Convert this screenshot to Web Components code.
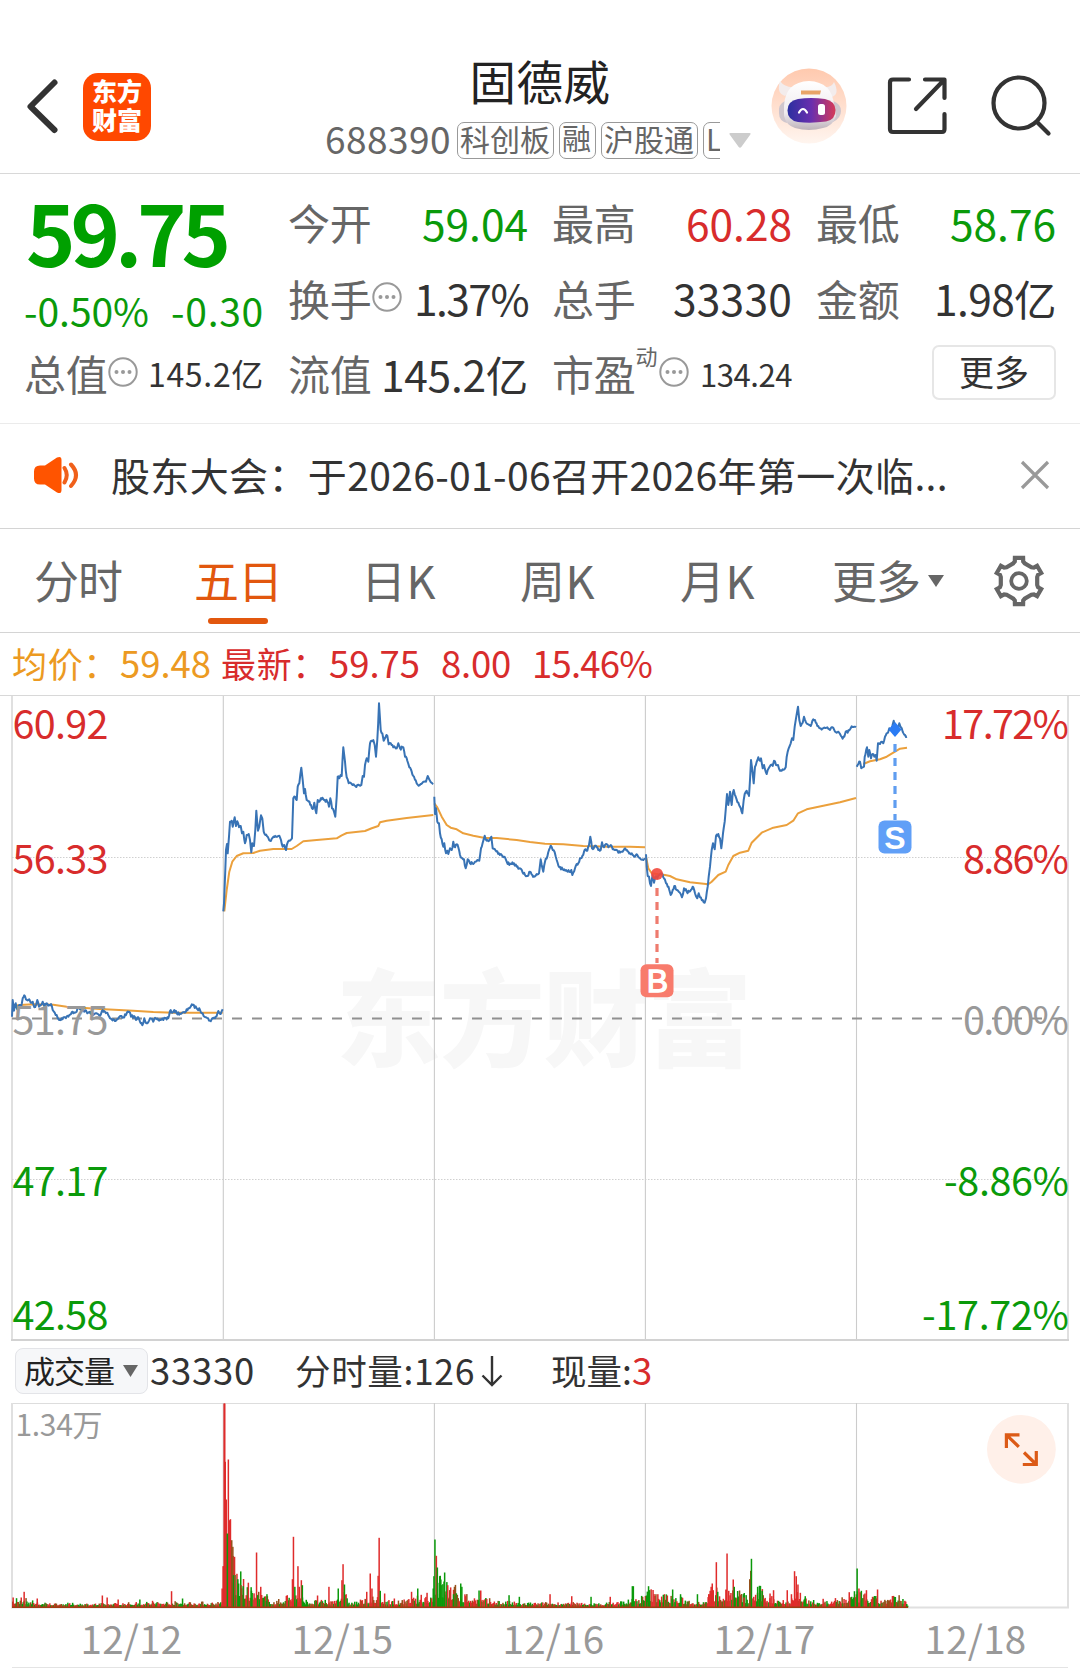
<!DOCTYPE html>
<html lang="zh-CN">
<head>
<meta charset="utf-8">
<title>固德威 688390</title>
<style>
html,body{margin:0;padding:0;background:#fff}
body{width:1080px;height:1668px;overflow:hidden;font-family:"Noto Sans CJK SC",sans-serif;color:#333}
</style>
</head>
<body>
<stock-page></stock-page>
<script>
const GREEN='#0a9a0a', RED='#d82c2c', GREY='#666', LIGHT='#999', ORANGE='#e2570e';

function define(name, html, after){
  customElements.define(name, class extends HTMLElement{
    constructor(){ super(); this.attachShadow({mode:'open'}); }
    connectedCallback(){
      this.shadowRoot.innerHTML = typeof html==='function' ? html(this) : html;
      if(after) after(this);
    }
  });
}

define('x-text', el=>`<style>
  :host{display:block;flex:none;white-space:pre;${el.hasAttribute('w')?`width:${el.getAttribute('w')}px;`:''}
    font-size:${el.getAttribute('size')||36}px;color:${el.getAttribute('c')||'inherit'};font-weight:${el.getAttribute('wt')||400}}
  div{line-height:1.2;margin-top:${el.getAttribute('lift')||'-.05'}em;white-space:pre}
</style><div><span><slot></slot></span></div>`, el=>{
  const w=+el.getAttribute('w'); if(!w) return;
  const n=[...el.textContent].length, s=el.shadowRoot.querySelector('span');
  s.style.letterSpacing=((w-s.getBoundingClientRect().width)/n)+'px';
});

define('info-dot', `<style>:host{display:block;flex:none;width:30px;height:30px;margin-top:-4px}svg{display:block}</style>
<svg width="30" height="30"><circle cx="15" cy="15" r="13.7" fill="none" stroke="#999" stroke-width="2"/>
<g fill="#999"><circle cx="8.5" cy="15" r="2"/><circle cx="15" cy="15" r="2"/><circle cx="21.5" cy="15" r="2"/></g></svg>`);

define('stock-tag', `<style>:host{display:flex;flex:none;box-sizing:border-box;height:37px;border:1.5px solid #999;border-radius:7px;align-items:center;padding-left:2px;color:#666}</style><slot></slot>`);

define('top-bar', `<style>
:host{display:flex;box-sizing:border-box;height:174px;padding-top:40px;border-bottom:1px solid #d8d8d8;align-items:center}
svg{display:block;flex:none}
.logo{flex:none;width:68px;height:68px;border-radius:15px;background:#ff4800;margin-left:21px;display:flex;flex-direction:column;align-items:center;justify-content:center;gap:2px;box-sizing:border-box;padding-bottom:1px}
.mid{flex:none;margin-left:174px;width:426px;align-self:stretch}
.title{display:flex;justify-content:center;align-items:center;height:58px;padding:13px 0 0 4px}
.code{display:flex;align-items:center;height:37px;margin-top:11px}
.tags{display:flex;gap:5px;width:263px;margin-left:6px;overflow-x:clip;overflow-y:visible}
</style>
<svg width="36" height="60" style="margin-left:25px"><path d="M29.5 5.500 5.500 29.500 29.500 53" fill="none" stroke="#333" stroke-width="6" stroke-linecap="round" stroke-linejoin="round"/></svg>
<div class="logo" style="margin-left:22px"><x-text size="25" w="50" c="#fff" wt="900" lift="-.12">东方</x-text><x-text size="25" w="50" c="#fff" wt="900" lift="-.12">财富</x-text></div>
<div class="mid">
 <div class="title"><x-text size="46.500" w="141" c="#222" lift="-.1">固德威</x-text></div>
 <div class="code"><x-text size="37" w="126" c="#666" lift="-.12">688390</x-text>
  <div class="tags"><stock-tag style="width:97px"><x-text size="30" w="90" lift="-.18">科创板</x-text></stock-tag><stock-tag style="width:37px"><x-text size="29" w="30" lift="-.18">融</x-text></stock-tag><stock-tag style="width:97px"><x-text size="30" w="90" lift="-.18">沪股通</x-text></stock-tag><stock-tag style="width:37px"><x-text size="30" lift="-.18">L</x-text></stock-tag></div>
  <svg width="22" height="15" style="margin-left:9px"><path d="M1.500 0h19q2 0 .5 2L12.300 14q-1.300 1.500-2.600 0L1 2Q-.5 0 1.500 0z" fill="#ccc"/></svg>
 </div>
</div>
<svg width="76" height="76" viewBox="0 0 76 76" style="margin-left:20px;margin-top:-1px">
 <defs><linearGradient id="bg" x2="0" y2="1"><stop offset="0" stop-color="#ffc9ae"/><stop offset="1" stop-color="#fff5ef"/></linearGradient>
 <linearGradient id="visor"><stop offset="0" stop-color="#2b2fa0"/><stop offset=".5" stop-color="#6a2fae"/><stop offset="1" stop-color="#d63a58"/></linearGradient>
 <linearGradient id="shell" x2="0" y2="1"><stop offset="0" stop-color="#fff"/><stop offset=".65" stop-color="#efebee"/><stop offset="1" stop-color="#bdb2ba"/></linearGradient></defs>
 <circle cx="38" cy="38" r="37.500" fill="url(#bg)"/>
 <path d="M9 13Q5 25 14 28L24 19Q14 20 9 13zM63 14Q69 26 61 29L52 19Q61 20 63 14z" fill="#f3ecec"/>
 <path d="M14 33Q7 36 8 45Q8 53 16 55zM62 33Q70 36 70 43Q70 50 62 54z" fill="#cfc6cd"/>
 <path d="M13 38Q14 14 38 13Q61 14 63 37L65 48Q62 58 52 60Q38 64 24 60Q15 57 13 48z" fill="url(#shell)"/>
 <path d="M27 31Q40 29 54 31Q64 33 64.500 42Q64.500 52 55 53.500Q40 55.500 27 54Q16.500 52 16.500 42.500Q16.500 33 27 31z" fill="url(#visor)"/>
 <path d="M30 22.500h20l-1 4H30z" fill="#e8a468"/><path d="M28 44.500q4-7 8 0" fill="none" stroke="#fff" stroke-width="2.200" stroke-linecap="round"/><rect x="47" y="36" width="7" height="11" rx="2.500" fill="#fff"/>
</svg>
<svg width="60" height="60" style="margin-left:40px;margin-top:-1px" fill="none" stroke="#333" stroke-width="4.200" stroke-linecap="round" stroke-linejoin="round"><path d="M22 3.500H6Q3 3.500 3 6.500V53Q3 56 6 56H55Q57.500 56 57.500 53V38M38 3.500H57.500V22M57 4 29 33"/></svg>
<svg width="62" height="62" style="margin-left:43px;margin-top:-2px" fill="none" stroke="#333" stroke-width="4.200" stroke-linecap="round"><circle cx="29" cy="28" r="25.500"/><path d="M47 47 58.500 58.500"/></svg>`);

define('stat-cell', `<style>:host{display:flex;align-items:center;min-width:0}.v{margin-left:auto;display:flex}.u{margin-bottom:38px}</style>
<slot name="label"></slot><div class="u"><slot name="sup"></slot></div><slot name="icon"></slot><div class="v"><slot></slot></div>`);

const lab=(t)=>`<x-text slot="label" size="42" w="83.500" c="#666">${t}</x-text>`;
const cell=(t,v,w,c='#333',o={})=>`<stat-cell>${lab(t)}${o.sup?`<x-text slot="sup" size="22" w="23" c="#666">动</x-text>`:''}${o.dot?'<info-dot slot="icon"></info-dot>':''}<x-text size="${o.size||42.5}" w="${w}" c="${c}">${v}</x-text></stat-cell>`;
define('stat-grid', `<style>
:host{display:grid;box-sizing:border-box;height:250px;padding:12px 0 0 24px;grid-template-columns:repeat(4,240px);grid-template-rows:repeat(3,75.300px);column-gap:24px;border-bottom:1px solid #ebebeb}
.price{grid-row:1/3;display:flex;flex-direction:column}
.big{height:100px;display:flex;align-items:center;padding-left:2px}
.chg{height:50px;display:flex;align-items:center;justify-content:space-between}
.more{justify-self:end;align-self:center;width:124px;height:55px;box-sizing:border-box;border:2px solid #e6e6e6;border-radius:7px;display:flex;align-items:center;justify-content:center;margin-top:-3px;margin-right:0}
</style>
<div class="price"><div class="big"><x-text size="84" w="200" c="#00a000" wt="700" lift="-.1">59.75</x-text></div>
<div class="chg"><x-text size="39" w="125" c="${GREEN}">-0.50%</x-text><x-text size="39" w="93" c="${GREEN}">-0.30</x-text></div></div>
${cell('今开','59.04',106,GREEN)}${cell('最高','60.28',106,RED)}${cell('最低','58.76',106,GREEN)}
${cell('换手','1.37%',114,'#333',{dot:1})}${cell('总手','33330',119)}${cell('金额','1.98亿',122)}
${cell('总值','145.2亿',116,'#333',{dot:1,size:32})}${cell('流值','145.2亿',147)}${cell('市盈','134.24',92,'#333',{dot:1,size:31,sup:1})}
<div class="more"><x-text size="35" w="70" lift="-.1">更多</x-text></div>`);

define('notice-bar', `<style>:host{display:flex;box-sizing:border-box;height:105px;border-bottom:1px solid #d4d4d4;align-items:center;padding-bottom:2px}svg{flex:none;display:block}x-text{margin-left:32px}</style>
<svg width="46" height="38" style="margin-left:33px"><path d="M7 9.500H12L24 1.500Q28.500-.500 28.500 4V34Q28.500 38.500 24 36.500L12 28.500H7Q1 28.500 1 22.500V15.500Q1 9.500 7 9.500z" fill="#ff5400"/><path d="M31.500 12Q36 19 31.500 26.500M38 8.500Q48 19 38 30" fill="none" stroke="#f0601a" stroke-width="4" stroke-linecap="round"/></svg>
<x-text size="39" w="837">股东大会：于2026-01-06召开2026年第一次临...</x-text>
<svg width="30" height="30" style="margin-left:72px"><path d="M2 2 28 28M28 2 2 28" stroke="#999" stroke-width="3.200"/></svg>`);

let gear='';
for(let k=0;k<6;k++){const p=(a,r)=>{const t=(k*60+a-90)*Math.PI/180;return (26+r*Math.cos(t)).toFixed(1)+' '+(26+r*Math.sin(t)).toFixed(1)};
 gear+=(k?'L':'M')+p(-18,18.6)+'L'+p(-12,20)+'L'+p(-10,23.6)+'L'+p(10,23.6)+'L'+p(12,20)+'L'+p(18,18.6);}
gear+='Z';
define('period-tabs', `<style>:host{display:flex;box-sizing:border-box;height:104px;border-bottom:1px solid #d4d4d4;color:#666;padding-left:34px}
div{flex:none;display:flex;flex-direction:column;align-items:center;height:103px;justify-content:flex-end;box-sizing:border-box}
.t{height:72px;flex-direction:row;justify-content:center;align-items:center;margin-bottom:15px}
i{display:block;height:6px;width:60px;border-radius:3px;background:${ORANGE};flex:none;margin-top:-1px}
.on{padding-bottom:8px;color:${ORANGE}}.on .t{margin-bottom:2px}
svg{display:block}</style>
<div style="width:88px"><div class="t"><x-text size="45" w="88">分时</x-text></div></div>
<div class="on" style="width:88px;margin-left:72px"><div class="t"><x-text size="45" w="88">五日</x-text></div><i></i></div>
<div style="width:75px;margin-left:79px"><div class="t"><x-text size="45" w="75">日K</x-text></div></div>
<div style="width:75px;margin-left:84px"><div class="t"><x-text size="45" w="75">周K</x-text></div></div>
<div style="width:75px;margin-left:85px"><div class="t"><x-text size="45" w="75">月K</x-text></div></div>
<div style="width:112px;margin-left:77px"><div class="t"><x-text size="45" w="88">更多</x-text><svg width="16" height="12" style="margin-left:8px"><path d="M0 0h16L8 12z" fill="#666"/></svg></div></div>
<div style="width:52px;margin-left:49px"><div class="t"><svg width="52" height="52"><path d="${gear}" fill="none" stroke="#666" stroke-width="4.200"/><circle cx="26" cy="26" r="7.800" fill="none" stroke="#666" stroke-width="3.800"/></svg></div></div>`);

define('price-legend', `<style>:host{display:flex;box-sizing:border-box;height:63px;border-bottom:1px solid #d8d8d8;align-items:center;padding:0 0 1px 12px}</style>
<x-text size="35" w="107" c="#ec9a22">均价：</x-text><x-text size="36.5" w="91" c="#ec9a22" style="margin-left:1px">59.48</x-text>
<x-text size="35" w="107" c="${RED}" style="margin-left:10px">最新：</x-text><x-text size="36.5" w="91" c="${RED}" style="margin-left:1px">59.75</x-text>
<x-text size="36.5" w="70" c="${RED}" style="margin-left:21px">8.00</x-text><x-text size="36.5" w="120" c="${RED}" style="margin-left:21px">15.46%</x-text>`);

/* Intraday traces, in thirds of a pixel from each day's origin. */
const DAYS=[
 [0,'36,980 38,930 42,962 47,940 52,958 58,945 63,952 68,925 73,916 80,930 88,928 92,938 98,935 103,952 108,945 112,930 117,950 123,945 128,935 133,948 140,940 147,945 153,942 158,960 164,968 170,975 177,990 185,985 195,982 205,980 213,972 218,965 225,968 235,955 245,960 255,962 262,970 270,965 280,975 290,970 300,978 308,960 315,965 322,968 330,985 340,988 347,993 355,985 362,978 370,982 380,970 388,965 393,980 402,978 408,990 415,982 420,995 427,1006 433,985 440,1000 450,985 460,995 468,985 475,990 485,988 495,985 505,985 512,960 517,968 523,960 530,970 545,970 555,968 565,955 578,945 590,955 600,960 608,970 618,982 630,992 640,985 650,978 655,963 662,972 668,958',
  '36,948 60,945 100,943 160,944 200,950 300,957 400,962 460,966 520,968 668,968'],
 [0,'670,664 672,640 676,540 678,480 681,462 683,490 687,440 690,395 695,392 698,410 704,382 708,408 712,394 717,412 722,408 726,430 730,425 735,460 740,435 746,432 750,450 754,487 757,460 762,468 766,420 769,362 774,422 778,410 783,376 787,385 791,425 796,435 803,440 810,452 818,443 828,440 838,437 843,450 848,470 853,465 858,480 864,455 872,450 876,445 880,325 885,320 890,330 893,290 898,280 904,233 908,270 912,310 915,297 920,330 926,335 933,345 938,357 943,338 949,370 953,330 960,332 967,323 974,330 982,335 987,350 991,325 996,355 1002,365 1006,380 1010,320 1013,260 1018,265 1022,255 1025,258 1030,172 1035,215 1040,262 1046,280 1055,282 1066,288 1075,284 1084,285 1088,258 1092,260 1095,225 1100,205 1105,215 1110,160 1115,152 1120,150 1124,165 1128,200 1132,150 1137,40 1142,120 1147,130 1151,152 1157,140 1162,137 1166,163 1172,160 1180,172 1190,175 1195,160 1200,175 1210,172 1215,200 1222,212 1228,232 1235,245 1242,260 1253,284 1262,282 1272,275 1278,275 1283,258 1290,272 1300,282',
  '673,664 680,600 688,545 697,515 710,498 730,490 760,489 780,482 820,477 875,477 890,468 910,454 950,450 1010,445 1025,436 1040,429 1095,423 1115,415 1135,408 1140,397 1160,392 1220,384 1300,375'],
 [430,'13,320 15,372 18,355 22,395 27,400 30,430 35,448 40,470 43,460 48,490 52,482 55,492 60,475 65,480 70,455 73,470 80,463 85,472 90,495 97,505 102,508 107,535 113,508 120,520 127,520 135,515 142,510 148,512 153,475 158,458 164,437 170,452 178,452 184,440 188,475 197,482 207,490 215,495 222,500 230,515 238,525 245,522 252,520 260,530 270,535 278,548 285,555 293,558 300,545 307,555 314,560 320,552 327,550 332,508 335,525 340,545 345,515 352,500 357,480 362,467 368,480 374,487 380,510 388,532 398,538 408,540 418,545 424,540 427,555 435,535 440,522 445,520 450,505 457,498 462,485 467,478 472,482 477,465 481,440 486,475 493,470 500,472 507,478 512,480 516,457 522,472 528,462 535,472 542,465 548,478 555,480 565,488 575,485 585,475 595,485 605,490 615,500 622,495 632,508 640,510 645,505',
  '13,340 22,352 35,380 50,405 62,413 80,418 100,430 130,437 165,444 200,444 260,450 300,456 345,461 400,463 460,468 540,470 600,470 645,472'],
 [640,'18,493 20,530 23,558 27,560 30,580 33,588 38,555 42,578 46,560 52,565 58,555 65,550 72,565 78,580 83,590 88,600 92,615 98,600 103,588 110,600 116,605 122,612 126,622 132,595 140,605 148,605 155,598 158,590 165,610 172,625 176,610 180,622 188,630 194,638 198,625 203,590 206,560 210,530 215,480 219,460 224,478 228,438 235,432 240,445 244,475 249,430 254,395 257,360 261,312 265,345 270,305 275,345 278,310 281,300 287,320 295,338 300,350 307,370 311,330 314,312 320,302 327,318 330,270 333,210 337,240 341,280 345,230 350,215 355,202 360,212 363,205 368,235 372,225 380,252 388,232 392,225 398,228 402,212 408,225 414,225 420,242 428,238 437,232 440,200 446,175 452,160 456,145 460,150 464,110 468,85 474,50 478,90 482,108 488,98 492,80 497,95 503,102 512,108 520,88 525,90 532,108 540,115 550,115 562,112 570,120 577,112 585,125 595,125 603,138 608,146 613,140 617,125 623,128 630,118 637,110 643,110 648,112',
  '18,500 25,535 35,550 50,552 75,555 90,558 110,568 150,577 205,583 215,575 235,555 257,545 265,525 280,498 300,488 325,482 335,458 365,428 400,413 440,405 460,392 474,370 500,358 550,347 600,337 648,324'],
 [640,'650,230 655,222 660,215 664,235 668,232 672,230 674,200 681,172 685,200 688,180 693,205 698,192 703,200 707,195 710,212 714,160 720,162 726,155 730,160 735,140 740,130 744,128 748,115 753,120 757,108 761,92 766,110 770,120 778,100 783,112 788,125 795,135 801,140',
  '670,222 690,214 720,208 740,200 765,185 780,176 801,173']];
let seed=7; const rnd=()=>(seed=(seed*16807)%2147483647)/2147483647;
const COLS=[223.3,434.4,645.4,856.5];
const toPts=(s,off,j)=>{
  const p=s.split(' ').map(q=>q.split(',').map(Number)), out=[];
  p.forEach(([x,y],i)=>{ out.push([x,y]); const n=p[i+1];
    if(j&&n&&n[0]-x>4){const k=Math.max(2,Math.round((n[0]-x)/2.7));for(let m=1;m<k;m++)out.push([x+(n[0]-x)*m/k,y+(n[1]-y)*m/k+(rnd()-.5)*j]);}});
  return out.map(([x,y])=>(off+x/3).toFixed(1)+','+(y/3-6).toFixed(1)).join(' ');
};
/* Chart canvas: its y origin is at page y 696. */
const lbl=(t,y,x,w,c)=>`<text x="${x}" y="${y}" font-size="39.500" fill="${c}" textLength="${w}" lengthAdjust="spacing">${t}</text>`;
define('price-chart', `<style>:host{display:block;height:645px}svg{display:block}text{font-family:"Noto Sans CJK SC",sans-serif}.k{font-family:"Liberation Sans",sans-serif}</style>
<svg width="1080" height="645">
<g fill="#f7f7f7" font-size="105" font-weight="900"><text x="336" y="362" textLength="416" lengthAdjust="spacing">东方财富</text></g>
<path d="M12 0V644M1068 0V644" stroke="#e0e0e0" stroke-width="2"/>
<path d="${COLS.map(x=>`M${x} 0V644`).join('')}" stroke="#ccc" stroke-width="1.100"/>
<path d="M11 644H1069" stroke="#d2d2d2" stroke-width="2"/>
<path d="M12 161.500H1068M12 483.500H1068" stroke="#d0d0d0" stroke-width="1" stroke-dasharray="1.500 1.500"/>
<path d="M12 322.500H1068" stroke="#909090" stroke-width="2" stroke-dasharray="10 10"/>
<g fill="none" stroke-linejoin="round">
${DAYS.map(d=>`<polyline points="${toPts(d[2],d[0],0)}" stroke="#eba03c" stroke-width="2"/>`).join('')}
${DAYS.map(d=>`<polyline points="${toPts(d[1],d[0],9)}" stroke="#3873b5" stroke-width="2"/>`).join('')}
</g>
${lbl('60.92',43,12.5,96,RED)}${lbl('56.33',178,12.5,96,RED)}${lbl('51.75',339,12.5,96,LIGHT)}${lbl('47.17',500,12.5,96,GREEN)}${lbl('42.58',633.5,12.5,96,GREEN)}
${lbl('17.72%',43,942,127,RED)}${lbl('8.86%',178,963,106,RED)}${lbl('0.00%',339,963,106,LIGHT)}${lbl('-8.86%',500,944,125,GREEN)}${lbl('-17.72%',633.5,922,147,GREEN)}
<circle cx="657" cy="178" r="6" fill="#f2483c" opacity=".9"/>
<path d="M657 192V267" stroke="#ee7b6e" stroke-width="3.200" stroke-dasharray="8 6"/>
<rect x="640.500" y="268.300" width="33" height="33" rx="6" fill="#f87b6c"/>
<text class="k" x="657.500" y="296" text-anchor="middle" font-size="32" fill="#fff" stroke="#fff" stroke-width="1.300">B</text>
<path d="M895 26 901.500 33.500 895 41 888.500 33.500z" fill="#2a7bf4"/>
<path d="M895 45V124" stroke="#5f9df0" stroke-width="3.200" stroke-dasharray="8 6" stroke-dashoffset="-3"/>
<rect x="878.500" y="124.500" width="33" height="33" rx="6" fill="#609ff7"/>
<text class="k" x="895" y="152.500" text-anchor="middle" font-size="32" font-weight="700" fill="#fff">S</text>
</svg>`);

define('volume-row', `<style>:host{display:flex;box-sizing:border-box;height:62px;align-items:center;padding-left:15px;padding-bottom:2px}
.b{flex:none;width:133px;height:46px;box-sizing:border-box;border:1.500px solid #e3e4e8;border-radius:8px;background:#f6f7f9;display:flex;align-items:center;padding-left:8px;gap:9px}svg{display:block;flex:none}</style>
<div class="b"><x-text size="31" w="90" c="#222" lift="-.1">成交量</x-text><svg width="15" height="12"><path d="M0 0h15L7.500 12z" fill="#666"/></svg></div>
<x-text size="36.5" w="105" style="margin-left:2px">33330</x-text>
<x-text size="35.5" w="180" style="margin-left:40px">分时量:126</x-text>
<svg width="22" height="32" style="margin-left:6px;margin-top:0"><path d="M11 1V29.500M1.500 20.500 11 30 20.500 20.500" fill="none" stroke="#333" stroke-width="2.400"/></svg>
<x-text size="35.5" w="81" style="margin-left:48px">现量:</x-text><x-text size="36.5" w="22" c="${RED}">3</x-text>`);

/* Volume bars: thin noise under an envelope, then the named peaks (x, top, colour). */
const ENV=[[12,12],[22,12],[40,5],[100,4],[160,7],[215,6],[221.5,8],[223,60],[229,110],[235,60],[244,34],[262,18],[275,7],[292,22],[306,9],[330,8],[342,24],[350,6],[372,13],[396,7],[412,12],[433,20],[437,45],[446,40],[462,20],[480,12],[520,5],[560,6],[600,4],[625,9],[640,14],[650,25],[672,15],[700,7],[714,26],[738,26],[748,12],[758,28],[772,14],[790,10],[798,28],[808,8],[830,8],[853,20],[864,18],[880,12],[896,16],[903,13],[907,3]];
const env=x=>{for(let i=1;i<ENV.length;i++)if(x<=ENV[i][0]){const a=ENV[i-1],b=ENV[i];return a[1]+(b[1]-a[1])*(x-a[0])/(b[0]-a[0]);}return 0};
const PEAK1='r38,832 r70,815 r108,835 r297,826 r311,832 r343,838 g406,838 r443,842 r498,813 g530,835 r645,805 r648,738 r654,425 r657,538 r663,418 r666,600 r669,597 g660,640 b673,660 b676,680 r681,710 g678,765 g693,790 b700,795 g706,798 r715,825 g730,812 r745,697 g748,825 r757,800 g775,822 r834,825 r849,777 r852,650 g856,800 r865,738 r869,800 r875,780 g878,795 r922,826 r955,800 g982,805 r993,780 r996,732 g1000,793 r1065,815 r1075,760 r1080,805 r1098,767 r1101,653 g1104,812 r1117,820 r1145,835 r1195,815 g1213,805 r1240,818 g1258,805 g1260,768 g1263,658 r1267,707 g1270,742 g1277,768 g1280,778 g1286,792 g1291,757 r1300,795 g1317,822 g1338,790 g1341,800 r1352,828 g1391,811 r1396,811 g1478,825 g1508,830'.split(' ');
const PEAK2='r29,822 r92,828 g148,830 r204,830 g268,798 g271,798 g315,798 g318,810 r342,822 g358,824 g385,808 g408,822 g457,822 r490,822 r494,812 r497,800 r500,790 r503,810 r512,726 g516,815 r540,808 r543,700 r548,812 r561,778 g564,800 r592,832 b609,777 b612,752 g614,716 g632,800 g645,812 r668,820 r678,810 r718,810 r730,822 r739,753 r744,768 r749,793 g770,828 r822,836 r898,816 g921,745 r926,805 g933,812 r948,810 r980,808'.split(' ');
const HUE={r:'#df2b2b',g:'#0b990b',b:'#94501a'};
function bars(){
  let s='';
  const bar=(x,h,c)=>{s+=`<rect x="${x.toFixed(1)}" y="${(204.500-h).toFixed(1)}" width="1.500" height="${h.toFixed(1)}" fill="${HUE[c]}"/>`};
  for(let x=12;x<907;x+=.95){const e=env(x), h=1.300+e*(.18+.6*Math.pow(rnd(),2)); const q=rnd(), rs=(x>222&&x<231)||(x>706&&x<715)||(x>787&&x<800);
    const gs=x>435&&x<447; bar(x,h,q<(rs?.75:gs?.1:.38)?'r':q<(gs?.9:.76)?'g':'b');}
  bar(223.400,204,'r');bar(224,204,'r');
  [[PEAK1,0],[PEAK2,540]].forEach(([l,o])=>l.forEach(p=>{const [x,y]=p.slice(1).split(',').map(Number);bar(o+x/2.904-.7,(862-y)/3,p[0])}));
  return s;
}
define('volume-chart', `<style>:host{display:block;height:206px}svg{display:block}text{font-family:"Noto Sans CJK SC",sans-serif}</style>
<svg width="1080" height="206">
<path d="M11 .5H1069" stroke="#ddd" stroke-width="1"/><path d="M12 0V205M1068 0V205M11 204.500H1069" stroke="#e0e0e0" stroke-width="2" fill="none"/>
<path d="${COLS.map(x=>`M${x} 0V204`).join('')}" stroke="#ccc" stroke-width="1.100"/>
<text x="15.500" y="32.500" font-size="30" fill="#999" textLength="87" lengthAdjust="spacing">1.34万</text>
${bars()}<path d="M12 204.300H908" stroke="#a03a14" stroke-width="1.600"/>
<circle cx="1021.400" cy="46.300" r="34.400" fill="#fff0e9"/>
<path d="M1019.500 31.800H1006.400V45M1006.400 31.800 1018.800 43.800M1022.800 61.500H1036.300V48M1036.300 61.500 1024 49.500" fill="none" stroke="#dc5a16" stroke-width="3.200"/>
</svg>`);

define('date-axis', `<style>:host{display:flex;box-sizing:border-box;height:59px;padding-left:26px;background:linear-gradient(#e4e4e4,#e4e4e4) 12px 58px/1056px 1px no-repeat}
div{flex:none;width:211px;display:flex;justify-content:center;align-items:center;padding-bottom:1px}</style>
${['12/12','12/15','12/16','12/17','12/18'].map(d=>`<div><x-text size="38.5" w="102" c="#999">${d}</x-text></div>`).join('')}`);

define('stock-page', `<style>:host{display:flex;flex-direction:column;width:1080px;height:1668px}:host>*{flex:none}</style>
<top-bar></top-bar><stat-grid></stat-grid><notice-bar></notice-bar><period-tabs></period-tabs><price-legend></price-legend>
<price-chart></price-chart><volume-row></volume-row><volume-chart></volume-chart><date-axis></date-axis>`);
</script>
</body>
</html>
